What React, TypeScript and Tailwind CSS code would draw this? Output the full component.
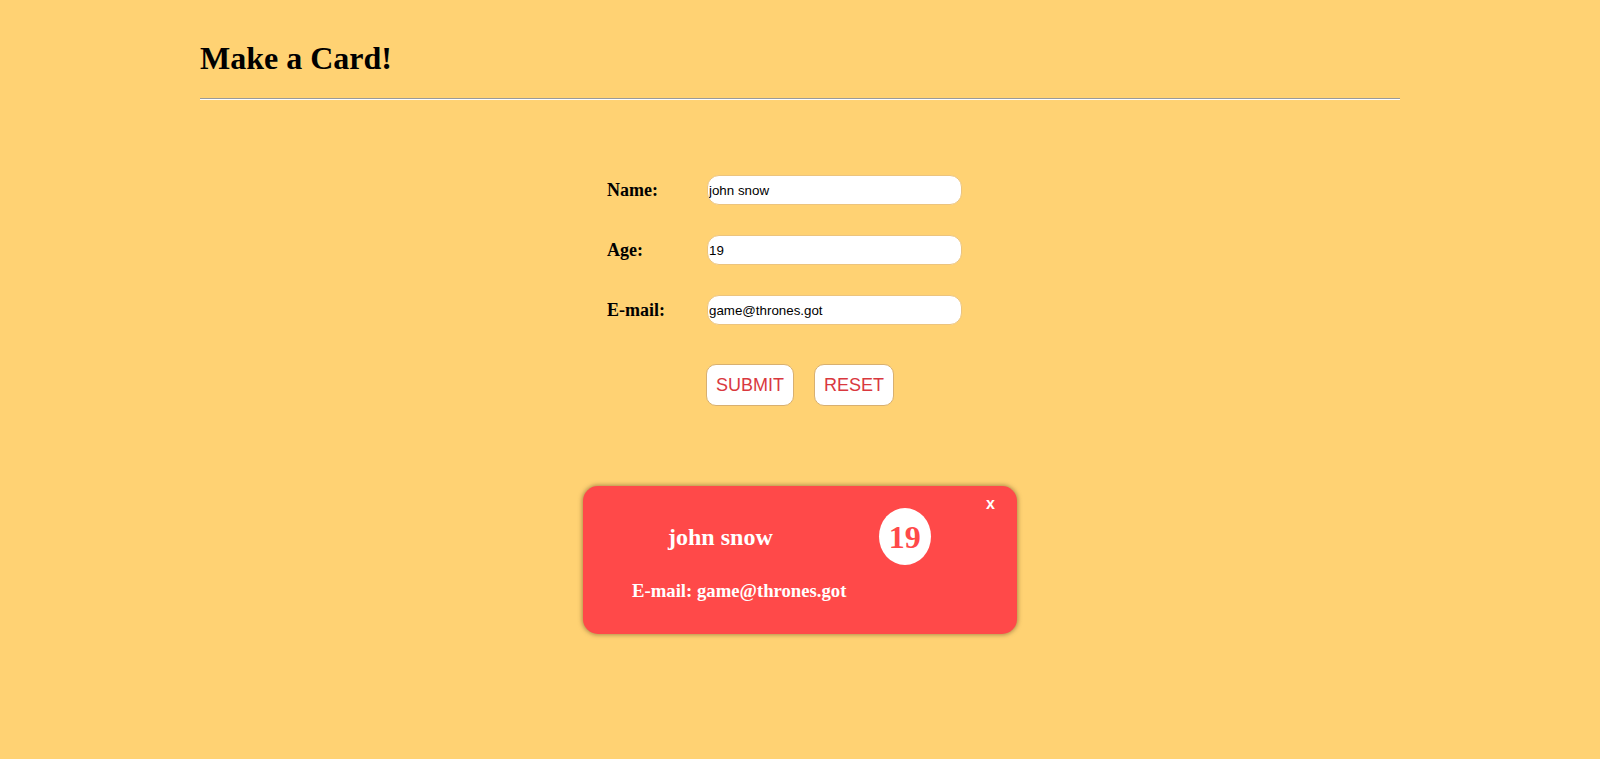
import {useState} from "react";

const serif = "font-['Liberation_Serif','Times_New_Roman',serif]"
const sans = "font-['Liberation_Sans',Arial,sans-serif]"

type CardData = {
    name: string
    age: string
    email: string
}

const Field = ({label, value, onChange}: { label: string, value: string, onChange: (v: string) => void }) => (
    <div className="flex items-center h-[30px] mb-[30px]">
        <label className={`${serif} w-[100px] text-[18px] font-bold text-black`}>{label}</label>
        <input
            className={`${sans} w-[255px] h-[30px] px-[1px] text-[13.33px] text-black bg-white border border-[#ecc47e] rounded-[12px] outline-none`}
            value={value}
            onChange={(e) => onChange(e.target.value)}
        />
    </div>
)

const App = () => {
    const [name, setName] = useState("john snow")
    const [age, setAge] = useState("19")
    const [email, setEmail] = useState("game@thrones.got")
    const [card, setCard] = useState<CardData | null>({name: "john snow", age: "19", email: "game@thrones.got"})

    const reset = () => {
        setName("")
        setAge("")
        setEmail("")
    }

    return (
        <div className="min-h-[759px] bg-[#ffd273] flow-root">
            <div className="w-[1200px] mx-auto pt-[40px]">
                <h1 className={`${serif} text-[32px] leading-[37px] font-bold text-black`}>Make a Card!</h1>
                <hr className="mt-[21px] border-t border-t-[#9a9a9a] border-b border-b-white"/>
            </div>

            <div className="w-[386px] mx-auto mt-[75px] flex flex-col">
                <Field label="Name:" value={name} onChange={setName}/>
                <Field label="Age:" value={age} onChange={setAge}/>
                <Field label="E-mail:" value={email} onChange={setEmail}/>

                <div className="flex gap-[20px] ml-[99px] mt-[9px]">
                    <button
                        onClick={() => setCard({name, age, email})}
                        className={`${sans} h-[42px] w-[88px] text-[18px] text-[#d9383e] bg-white border border-[#d8b070] rounded-[10px]`}>
                        SUBMIT
                    </button>
                    <button
                        onClick={reset}
                        className={`${sans} h-[42px] w-[80px] text-[18px] text-[#d9383e] bg-white border border-[#d8b070] rounded-[10px]`}>
                        RESET
                    </button>
                </div>
            </div>

            {card &&
                <div
                    className="relative w-[434px] mx-auto mt-[80px] h-[148px] bg-[#ff4949] rounded-[15px] shadow-[0_0_4px_1px_rgba(110,80,40,0.55)] pt-[22px]">
                    <button
                        onClick={() => setCard(null)}
                        className={`${sans} absolute top-[9px] right-[22px] text-[16px] font-bold text-white leading-[18px]`}>
                        x
                    </button>
                    <div className="flex items-center">
                        <div className={`${serif} ml-[85px] text-[24px] font-bold text-white`}>{card.name}</div>
                        <div
                            className={`${serif} ml-[106px] w-[52px] h-[57px] flex items-center justify-center bg-white rounded-[50%] text-[32px] font-bold text-[#ff4949]`}>
                            {card.age}
                        </div>
                    </div>
                    <div className={`${serif} mt-[12px] pl-[49px] text-[18.72px] font-bold text-white`}>
                        E-mail: {card.email}
                    </div>
                </div>
            }
        </div>
    );
};

export default App;
